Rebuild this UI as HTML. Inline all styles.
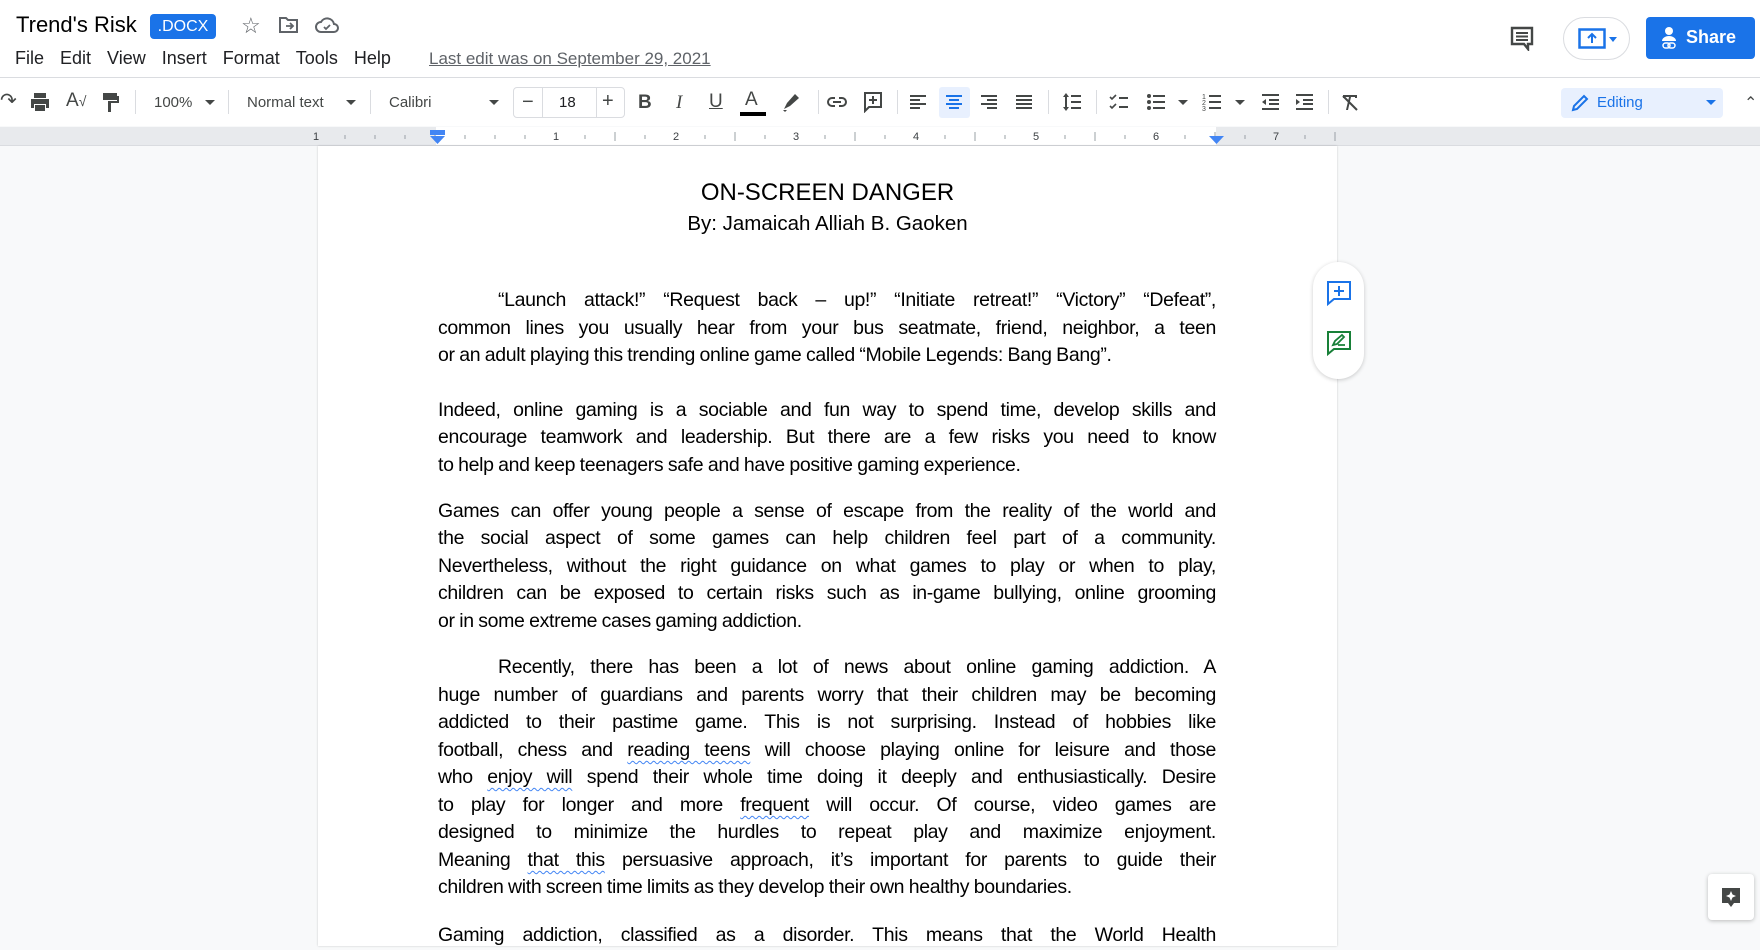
<!DOCTYPE html>
<html><head><meta charset="utf-8"><style>
*{margin:0;padding:0;box-sizing:border-box}
body{width:1760px;height:928px;overflow:hidden;background:#f8f9fa;font-family:"Liberation Sans",Arial,sans-serif;position:relative;color:#202124}
.a{position:absolute}
.top{left:0;top:0;width:1760px;height:78px;background:#fff;border-bottom:1px solid #dadce0}
.tb{left:0;top:78px;width:1760px;height:48px;background:#fff}
.ic{position:absolute;top:91px;width:22px;height:22px;fill:#444746}
.sep{position:absolute;top:90px;width:1px;height:24px;background:#dadce0}
.lbl{position:absolute;top:94px;font-size:15px;color:#444746}
.caret{position:absolute;top:100px;width:0;height:0;border-left:5px solid transparent;border-right:5px solid transparent;border-top:5px solid #444746}
.ruler{left:0;top:127px;width:1760px;height:19px;background:#e8eaed;border-bottom:1px solid #dadce0}
.page{left:318px;top:146px;width:1019px;height:800px;background:#fff;box-shadow:0 0 2px rgba(0,0,0,.2)}
.t{position:absolute;left:438px;width:778px;font-size:19.5px;line-height:27.6px;color:#000;white-space:nowrap;text-align:justify;text-align-last:justify;font-family:"Liberation Sans",sans-serif;letter-spacing:-0.35px;word-spacing:-0.5px}
.l{text-align-last:left}
.u{text-decoration:underline wavy #4285f4;text-underline-offset:4px;text-decoration-thickness:1px}
</style></head><body>
<div class="a top"></div>
<div class="a" style="left:16px;top:12px;font-size:22px;color:#000">Trend's Risk</div>
<div class="a" style="left:150px;top:14px;width:66px;height:25px;background:#1a73e8;border-radius:4px;color:#fff;font-size:16px;line-height:25px;text-align:center">.DOCX</div>
<div class="a" style="left:241px;top:13px;font-size:22px;color:#5f6368">☆</div>
<svg class="a" style="left:278px;top:15px" width="22" height="20" viewBox="0 0 22 20"><path d="M2 3h6l2 2h9v12H2z" fill="none" stroke="#5f6368" stroke-width="2"/><path d="M8 11h6M12 8l3 3-3 3" fill="none" stroke="#5f6368" stroke-width="1.8"/></svg>
<svg class="a" style="left:315px;top:15px" width="24" height="20" viewBox="0 0 24 20"><path d="M6 17a5 5 0 010-10 7 7 0 0113 2 4 4 0 010 8z" fill="none" stroke="#5f6368" stroke-width="2"/><path d="M9 12l2 2 4-4" fill="none" stroke="#5f6368" stroke-width="1.8"/></svg>
<div class="a" style="left:15px;top:48px;font-size:18px;color:#202124;word-spacing:0"><span>File</span><span style="margin-left:16px">Edit</span><span style="margin-left:16px">View</span><span style="margin-left:16px">Insert</span><span style="margin-left:16px">Format</span><span style="margin-left:16px">Tools</span><span style="margin-left:16px">Help</span></div>
<div class="a" style="left:429px;top:49px;font-size:17px;color:#5f6368;text-decoration:underline">Last edit was on September 29, 2021</div>
<svg class="a" style="left:1509px;top:25px" width="26" height="26" viewBox="0 0 26 26"><path d="M3 3h20v16h-4v5l-4-5H3z" fill="none" stroke="#444746" stroke-width="2.4"/><path d="M7 8h12M7 11.5h12M7 15h12" stroke="#444746" stroke-width="2"/></svg>
<div class="a" style="left:1563px;top:17px;width:67px;height:43px;border:1px solid #dadce0;border-radius:22px;background:#fff"></div>
<svg class="a" style="left:1578px;top:28px" width="40" height="22" viewBox="0 0 40 22"><rect x="1.5" y="1.5" width="25" height="18" fill="none" stroke="#1a73e8" stroke-width="2.5"/><path d="M14 15V7M10 10l4-4 4 4" fill="none" stroke="#1a73e8" stroke-width="2"/><path d="M31 9h8l-4 5z" fill="#1a73e8"/></svg>
<div class="a" style="left:1646px;top:17px;width:109px;height:42px;background:#1a73e8;border-radius:4px"></div>
<svg class="a" style="left:1660px;top:26px" width="18" height="24" viewBox="0 0 18 24"><circle cx="9" cy="5" r="4" fill="#fff"/><path d="M2 15a7 5 0 0114 0z" fill="#fff"/><rect x="3" y="17" width="7" height="5" rx="2.5" fill="none" stroke="#fff" stroke-width="1.5"/><rect x="8" y="17" width="7" height="5" rx="2.5" fill="none" stroke="#fff" stroke-width="1.5"/></svg>
<div class="a" style="left:1686px;top:27px;font-size:18px;color:#fff;font-weight:bold">Share</div>

<div class="a tb"></div>
<div class="lbl" style="left:0;top:88px;font-size:20px">↷</div>
<svg class="ic" style="left:29px" viewBox="0 0 22 22"><path d="M5 2h12v5H5z"/><path d="M2 8h18v9h-3v-4H5v4H2z"/><path d="M6 14h10v6H6z"/></svg>
<div class="lbl" style="left:66px;top:90px;font-size:19px">A<span style="font-size:14px">√</span></div>
<svg class="ic" style="left:100px" viewBox="0 0 22 22"><path d="M3 2h14v7H3z"/><path d="M17 5h2v7h-8v9H8v-11h9z"/></svg>
<div class="sep" style="left:135px"></div>
<div class="lbl" style="left:154px">100%</div><div class="caret" style="left:205px"></div>
<div class="sep" style="left:228px"></div>
<div class="lbl" style="left:247px">Normal text</div><div class="caret" style="left:346px"></div>
<div class="sep" style="left:370px"></div>
<div class="lbl" style="left:389px">Calibri</div><div class="caret" style="left:489px"></div>
<div class="a" style="left:513px;top:87px;width:112px;height:31px;border:1px solid #dadce0;border-radius:4px"></div>
<div class="a" style="left:542px;top:87px;width:1px;height:31px;background:#dadce0"></div>
<div class="a" style="left:596px;top:87px;width:1px;height:31px;background:#dadce0"></div>
<div class="lbl" style="left:522px;top:91px;font-size:20px">−</div>
<div class="lbl" style="left:559px;color:#202124">18</div>
<div class="lbl" style="left:602px;top:90px;font-size:20px">+</div>
<div class="lbl" style="left:638px;top:92px;font-size:19px;font-weight:bold">B</div>
<div class="lbl" style="left:676px;top:92px;font-size:19px;font-style:italic;font-family:'Liberation Serif'">I</div>
<div class="lbl" style="left:709px;top:91px;font-size:19px;text-decoration:underline">U</div>
<div class="lbl" style="left:745px;top:89px;font-size:19px">A</div>
<div class="a" style="left:740px;top:112px;width:26px;height:4px;background:#000"></div>
<svg class="ic" style="left:780px" viewBox="0 0 22 22"><path d="M4 18l3-6 8-9 4 4-9 8z"/><path d="M3 19h4l-2 2z"/></svg>
<div class="sep" style="left:818px"></div>
<svg class="ic" style="left:826px" viewBox="0 0 22 22"><path d="M9 7H6a4 4 0 000 8h3M13 7h3a4 4 0 010 8h-3M7 11h8" fill="none" stroke="#444746" stroke-width="2"/></svg>
<svg class="ic" style="left:862px" viewBox="0 0 22 22"><path d="M3 2h16v14H7l-4 4z" fill="none" stroke="#444746" stroke-width="2"/><path d="M11 5v8M7 9h8" stroke="#444746" stroke-width="2"/></svg>
<div class="sep" style="left:897px"></div>
<svg class="ic" style="left:907px" viewBox="0 0 22 22"><path d="M3 4h16v2H3zM3 8h10v2H3zM3 12h16v2H3zM3 16h10v2H3z"/></svg>
<div class="a" style="left:939px;top:87px;width:31px;height:31px;background:#e8f0fe;border-radius:3px"></div>
<svg class="ic" style="left:943px;fill:#1a73e8" viewBox="0 0 22 22"><path d="M3 4h16v2H3zM6 8h10v2H6zM3 12h16v2H3zM6 16h10v2H6z"/></svg>
<svg class="ic" style="left:978px" viewBox="0 0 22 22"><path d="M3 4h16v2H3zM9 8h10v2H9zM3 12h16v2H3zM9 16h10v2H9z"/></svg>
<svg class="ic" style="left:1013px" viewBox="0 0 22 22"><path d="M3 4h16v2H3zM3 8h16v2H3zM3 12h16v2H3zM3 16h16v2H3z"/></svg>
<div class="sep" style="left:1048px"></div>
<svg class="ic" style="left:1061px" viewBox="0 0 22 22"><path d="M5 2l3 4H6v10h2l-3 4-3-4h2V6H2zM10 4h10v2H10zM10 10h10v2H10zM10 16h10v2H10z"/></svg>
<div class="sep" style="left:1096px"></div>
<svg class="ic" style="left:1108px" viewBox="0 0 22 22"><path d="M2 6l2 2 4-4M2 15l2 2 4-4" fill="none" stroke="#444746" stroke-width="1.6"/><path d="M11 6h9v2h-9zM11 15h9v2h-9z"/></svg>
<svg class="ic" style="left:1145px" viewBox="0 0 22 22"><circle cx="4" cy="5" r="2"/><circle cx="4" cy="11" r="2"/><circle cx="4" cy="17" r="2"/><path d="M8 4h12v2H8zM8 10h12v2H8zM8 16h12v2H8z"/></svg>
<div class="caret" style="left:1178px"></div>
<svg class="ic" style="left:1201px" viewBox="0 0 22 22"><text x="1" y="8" font-size="7" fill="#444746">1</text><text x="1" y="14" font-size="7" fill="#444746">2</text><text x="1" y="20" font-size="7" fill="#444746">3</text><path d="M8 4h12v2H8zM8 10h12v2H8zM8 16h12v2H8z"/></svg>
<div class="caret" style="left:1235px"></div>
<svg class="ic" style="left:1259px" viewBox="0 0 22 22"><path d="M3 3h17v2H3zM10 8h10v2H10zM10 12h10v2H10zM3 17h17v2H3zM7 8v6l-4-3z"/></svg>
<svg class="ic" style="left:1293px" viewBox="0 0 22 22"><path d="M3 3h17v2H3zM10 8h10v2H10zM10 12h10v2H10zM3 17h17v2H3zM3 8v6l4-3z"/></svg>
<div class="sep" style="left:1328px"></div>
<svg class="ic" style="left:1339px" viewBox="0 0 22 22"><path d="M4 4h14v3h-2V6h-4l-3 13H7l3-13H6v1H4z"/><path d="M4 5l14 14" stroke="#444746" stroke-width="2"/></svg>
<div class="a" style="left:1561px;top:88px;width:162px;height:30px;background:#e8f0fe;border-radius:4px"></div>
<svg class="a" style="left:1570px;top:93px" width="20" height="20" viewBox="0 0 20 20"><path d="M3 17l1-4 10-10 3 3-10 10z" fill="none" stroke="#1a73e8" stroke-width="2"/></svg>
<div class="a" style="left:1597px;top:94px;font-size:15px;color:#1a73e8">Editing</div>
<div class="caret" style="left:1706px;border-top-color:#1a73e8"></div>
<div class="a" style="left:1744px;top:93px;font-size:16px;color:#444746">⌃</div>

<div class="a ruler"></div>
<div class="a" style="left:436px;top:127px;width:780px;height:18px;background:#fff"></div>
<svg class="a" style="left:0;top:127px" width="1760" height="19">
<g stroke="#9aa0a6" stroke-width="1">
<path d="M345 8v4M375 8v4M405 8v4M465 8v4M495 8v4M525 8v4M585 8v4M615 8v4M645 8v4M705 8v4M735 8v4M765 8v4M825 8v4M855 8v4M885 8v4M945 8v4M975 8v4M1005 8v4M1065 8v4M1095 8v4M1125 8v4M1185 8v4M1215 8v4M1245 8v4M1305 8v4"/>
<path d="M435 5v9M615 5v9M735 5v9M855 5v9M975 5v9M1095 5v9M1215 5v9M1335 5v9"/>
</g>
<g font-size="11" fill="#3c4043" font-family="Liberation Sans" text-anchor="middle">
<text x="316" y="13">1</text><text x="556" y="13">1</text><text x="676" y="13">2</text><text x="796" y="13">3</text><text x="916" y="13">4</text><text x="1036" y="13">5</text><text x="1156" y="13">6</text><text x="1276" y="13">7</text></g>
<rect x="430" y="3" width="15" height="5" fill="#4285f4"/><path d="M430 9h15l-7.5 8z" fill="#4285f4"/>
<path d="M1209 9h15l-7.5 8z" fill="#4285f4"/>
</svg>

<div class="a page"></div>
<div class="a" style="left:318px;top:179px;width:1019px;text-align:center;font-size:24px;color:#000">ON-SCREEN DANGER</div>
<div class="a" style="left:318px;top:212px;width:1019px;text-align:center;font-size:20.5px;color:#000">By: Jamaicah Alliah B. Gaoken</div>

<div class="t" style="top:287px;padding-left:60px">“Launch attack!” “Request back – up!” “Initiate retreat!” “Victory” “Defeat”,</div>
<div class="t" style="top:315px">common lines you usually hear from your bus seatmate, friend, neighbor, a teen</div>
<div class="t l" style="top:342px">or an adult playing this trending online game called “Mobile Legends: Bang Bang”.</div>

<div class="t" style="top:397px">Indeed, online gaming is a sociable and fun way to spend time, develop skills and</div>
<div class="t" style="top:424px">encourage teamwork and leadership. But there are a few risks you need to know</div>
<div class="t l" style="top:452px">to help and keep teenagers safe and have positive gaming experience.</div>

<div class="t" style="top:498px">Games can offer young people a sense of escape from the reality of the world and</div>
<div class="t" style="top:525px">the social aspect of some games can help children feel part of a community.</div>
<div class="t" style="top:553px">Nevertheless, without the right guidance on what games to play or when to play,</div>
<div class="t" style="top:580px">children can be exposed to certain risks such as in-game bullying, online grooming</div>
<div class="t l" style="top:608px">or in some extreme cases gaming addiction.</div>

<div class="t" style="top:654px;padding-left:60px">Recently, there has been a lot of news about online gaming addiction. A</div>
<div class="t" style="top:682px">huge number of guardians and parents worry that their children may be becoming</div>
<div class="t" style="top:709px">addicted to their pastime game. This is not surprising. Instead of hobbies like</div>
<div class="t" style="top:737px">football, chess and <span class="u">reading teens</span> will choose playing online for leisure and those</div>
<div class="t" style="top:764px">who <span class="u">enjoy will</span> spend their whole time doing it deeply and enthusiastically. Desire</div>
<div class="t" style="top:792px">to play for longer and more <span class="u">frequent</span> will occur. Of course, video games are</div>
<div class="t" style="top:819px">designed to minimize the hurdles to repeat play and maximize enjoyment.</div>
<div class="t" style="top:847px">Meaning <span class="u">that this</span> persuasive approach, it’s important for parents to guide their</div>
<div class="t l" style="top:874px">children with screen time limits as they develop their own healthy boundaries.</div>
<div class="t" style="top:922px">Gaming addiction, classified as a disorder. This means that the World Health</div>

<div class="a" style="left:1313px;top:262px;width:51px;height:117px;background:#fff;border-radius:26px;box-shadow:0 1px 4px rgba(0,0,0,.2)"></div>
<svg class="a" style="left:1326px;top:280px" width="26" height="26" viewBox="0 0 26 26"><path d="M2 2h22v17H8l-6 5z" fill="none" stroke="#1a73e8" stroke-width="2"/><path d="M13 6v10M8 11h10" stroke="#1a73e8" stroke-width="2"/></svg>
<svg class="a" style="left:1326px;top:330px" width="26" height="26" viewBox="0 0 26 26"><path d="M2 2h22v17H8l-6 5z" fill="none" stroke="#188038" stroke-width="2"/><path d="M7 15l2-4 7-6 2 2-7 7zM12 15h7" fill="none" stroke="#188038" stroke-width="1.8"/></svg>
<div class="a" style="left:1708px;top:874px;width:46px;height:46px;background:#fff;border-radius:4px;box-shadow:0 1px 4px rgba(0,0,0,.25)"></div>
<svg class="a" style="left:1720px;top:886px" width="22" height="22" viewBox="0 0 22 22"><path d="M2 2h18v15h-6l-3 4-3-4H2z" fill="#444746"/><path d="M11 5l1.5 3.5L16 10l-3.5 1.5L11 15l-1.5-3.5L6 10l3.5-1.5z" fill="#fff"/></svg>
</body></html>
